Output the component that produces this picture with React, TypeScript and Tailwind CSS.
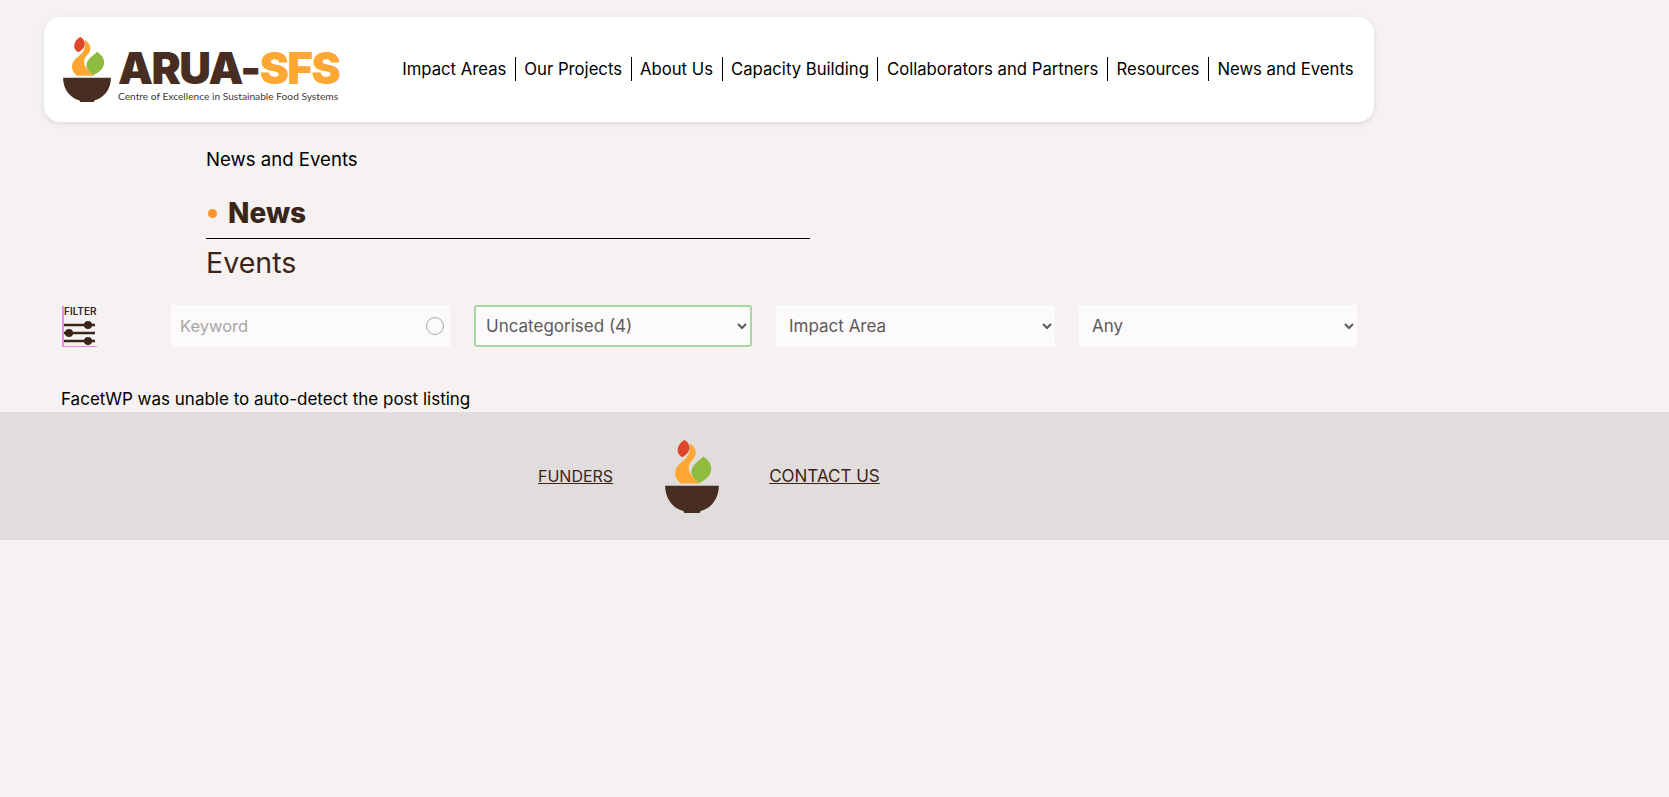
import React from 'react';

const nav = [
  'Impact Areas',
  'Our Projects',
  'About Us',
  'Capacity Building',
  'Collaborators and Partners',
  'Resources',
  'News and Events',
];

const selects = ['Uncategorised (4)', 'Impact Area', 'Any'];

const Mark = ({ className }: { className: string }) => (
  <svg viewBox="45 27 162 220" className={className}>
    <path d="M103 27C114 33 121 44 118 56C115 67 106 74 97 79C87 73 81 64 83 53C85 41 94 32 103 27Z" fill="#e0452c" />
    <path d="M119 36C132 45 140 58 137 71C133 86 119 92 116 108C114 126 131 146 153 158L92 158C79 148 73 134 76 120C80 101 99 93 110 80C118 68 122 52 119 36Z" fill="#ffa733" />
    <path d="M160 77C175 87 185 100 184 115C183 133 168 147 148 156C133 147 123 134 124 122C126 102 146 91 160 77Z" fill="#8fbc3f" />
    <path d="M45 165H207C207 205 182 234 152 241L149 247H103L100 241C70 234 45 205 45 165Z" fill="#472d22" />
  </svg>
);

const FilterIcon = () => (
  <div className="w-[35px] h-[41px] border-l-2 border-b border-[#f08ae6] flex flex-col">
    <span className="text-[10px] leading-[11px] font-semibold text-[#3b2519]">FILTER</span>
    <svg viewBox="0 0 32 28" className="w-[32px] h-[28px]">
      <g stroke="#3b2519" strokeWidth="2.5">
        <path d="M0 8H31M0 16H31M0 24H31" />
      </g>
      <g fill="#3b2519">
        <circle cx="24" cy="8" r="4" />
        <circle cx="5" cy="16" r="4" />
        <circle cx="24" cy="24" r="4" />
      </g>
    </svg>
  </div>
);

const App = () => {
  return (
    <div className="min-h-[797px] bg-[#f6f2f1] font-['Inter',sans-serif] text-black pt-[17px]">
      <header className="ml-[44px] w-[1330px] h-[105px] bg-white rounded-[16px] shadow-[0_2px_6px_rgba(0,0,0,0.1)] pl-[19px] pr-[12px] flex items-center justify-between">
        <div className="flex items-end gap-[7px]">
          <Mark className="w-[48px] h-[65px] mb-[1px]" />
          <div className="flex flex-col">
            <span className="font-black text-[44px] leading-[44px] tracking-[-1.6px] text-[#472d22]">
              ARUA-<span className="text-[#ffa733]">SFS</span>
            </span>
            <span className="font-['Lato',sans-serif] text-[10.200px] leading-[13px] text-[#3f3a38]">
              Centre of Excellence in Sustainable Food Systems
            </span>
          </div>
        </div>
        <nav className="flex items-center mb-[1px]">
          {nav.map((item, i) => (
            <span
              key={i}
              className={`px-[8.500px] text-[16.700px] leading-[24px] ${i > 0 ? 'border-l border-black' : ''}`}
            >
              {item}
            </span>
          ))}
        </nav>
      </header>

      <section className="ml-[206px] w-[604px] pt-[24px]">
        <p className="text-[18.600px] leading-[27px]">News and Events</p>
        <div className="mt-[19px] ml-[2px] flex items-center gap-[11px] h-[42px]">
          <span className="w-[9px] h-[9px] rounded-full bg-[#ff9429]" />
          <h2 className="text-[28px] leading-[42px] font-extrabold text-[#3b2519]">News</h2>
        </div>
        <div className="mt-[4px] border-t border-black pt-[3px]">
          <h2 className="text-[28.600px] leading-[42px] text-[#3b2519]">Events</h2>
        </div>
      </section>

      <div className="mt-[21px] pl-[62px] flex items-center">
        <FilterIcon />
        <div className="ml-[74px] flex gap-[24px]">
          <div className="w-[279px] h-[42px] bg-[#fcfafa] pl-[9px] pr-[6px] flex items-center justify-between">
            <input
              placeholder="Keyword"
              className="w-[200px] text-[16.500px] bg-transparent outline-none placeholder:text-[#a8a6a6]"
            />
            <span className="w-[18px] h-[18px] rounded-full border border-[#a9a9a9]" />
          </div>
          <select
            defaultValue={selects[0]}
            className="w-[278px] h-[42px] border-2 border-[#a9d6a6] rounded-[3px] pl-[6px] bg-[#fcfafa] text-[17px] text-[#5c5a5a]"
          >
            <option>{selects[0]}</option>
          </select>
          <select
            defaultValue={selects[1]}
            className="w-[279px] h-[42px] pl-[9px] bg-[#fcfafa] text-[17px] text-[#5c5a5a]"
          >
            <option>{selects[1]}</option>
          </select>
          <select
            defaultValue={selects[2]}
            className="w-[278px] h-[42px] pl-[9px] bg-[#fcfafa] text-[17px] text-[#5c5a5a]"
          >
            <option>{selects[2]}</option>
          </select>
        </div>
      </div>

      <p className="ml-[61px] mt-[40px] text-[17px] leading-[25px]">FacetWP was unable to auto-detect the post listing</p>

      <footer className="h-[128px] bg-[#e2dddd] pl-[538px] flex items-center text-[#3b2519]">
        <a className="text-[16px] underline">FUNDERS</a>
        <Mark className="ml-[52px] w-[54px] h-[73px]" />
        <a className="ml-[50px] mt-[2px] text-[17px] underline">CONTACT US</a>
      </footer>
    </div>
  );
};

export default App;
